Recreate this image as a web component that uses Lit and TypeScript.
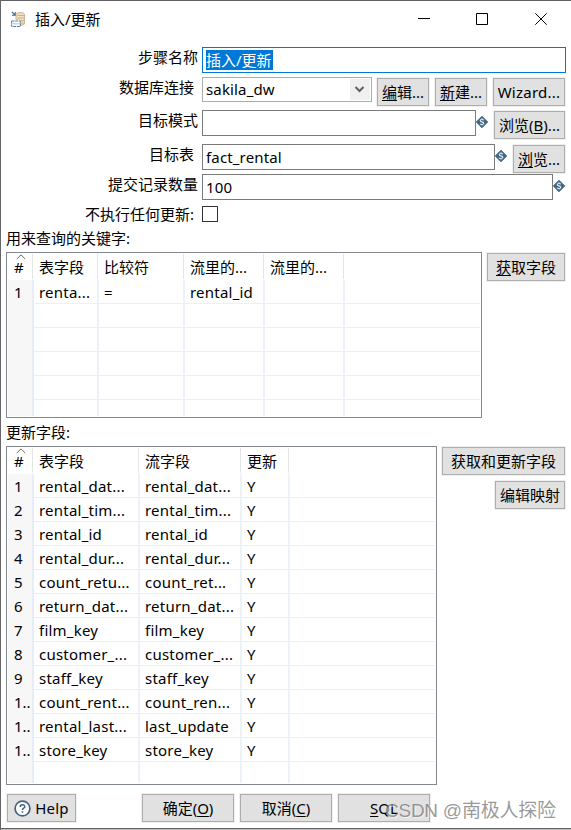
import { LitElement, html, css, nothing } from "lit";
import { customElement, property } from "lit/decorators.js";

const fontStack = css`"Noto Sans", "Noto Sans CJK SC", sans-serif`;

@customElement("push-button")
class PushButton extends LitElement {
  static styles = css`
    :host { display: block; flex: none; height: 28px; }
    .face {
      box-sizing: border-box; width: 100%; height: 28px; padding: 0; margin: 0;
      display: flex; align-items: center; justify-content: center; gap: 4px;
      border: 1px solid #adadad; border-radius: 0; background: #e1e1e1;
      box-shadow: 0 0 0 1px #f0f0f0; color: #000;
      font: 15px/26px ${fontStack}; white-space: nowrap; letter-spacing: var(--tracking, 0);
    }
  `;
  render() {
    return html`<button class="face"><slot></slot></button>`;
  }
}

@customElement("variable-mark")
class VariableMark extends LitElement {
  static styles = css`
    :host { display: block; flex: none; width: 12px; height: 12px; margin-top: 6px; }
    .mark { display: block; }
  `;
  render() {
    return html`<svg class="mark" width="12" height="12" viewBox="0 0 12 12">
      <path d="M6 .3 11.7 6 6 11.7 .3 6Z" fill="#3f6583" stroke="#3f6583" stroke-width="1" stroke-linejoin="round" />
      <path d="M7.9 4.2C7.5 3.4 4.2 3 4.2 4.7 4.2 6.2 7.8 5.6 7.8 7.3 7.8 9 4.5 8.7 4 7.7M6 2.3V3.3M6 8.6V9.6" fill="none" stroke="#e3ebf0" stroke-width="1.15" />
    </svg>`;
  }
}

interface Column { title: string; width: number; }

@customElement("field-table")
class FieldTable extends LitElement {
  @property({ attribute: false }) columns: Column[] = [];
  @property({ attribute: false }) rows: string[][] = [];
  @property({ type: Number }) blanks = 0;

  static styles = css`
    :host {
      display: block; box-sizing: border-box; flex: none; border: 1px solid #828790;
      background: #fff; overflow: hidden; padding: 0 1px 1px; font: 15px/24px ${fontStack};
      letter-spacing: 0.22px;
    }
    .grid { display: flex; flex-direction: column; height: 100%; overflow: hidden; }
    .line { display: grid; height: 24px; flex: none; box-sizing: border-box; border-bottom: 1px solid #efeff0; }
    .head { height: 27px; border-bottom: 0; letter-spacing: 0; }
    .cell { padding-left: 5px; white-space: nowrap; overflow: hidden; border-right: 2px solid #edf1fa; height: 24px; }
    .cell.index { padding-left: 6px; background: #f7f7f7; border-right-color: #e6edf9; letter-spacing: 0; }
    .cell.rest { border-right: 0; }
    .head .cell {
      position: relative; height: 25px; margin-top: 1px; line-height: 27px;
      border-right: 1px solid #e5e5e5; margin-right: 1px;
    }
    .head .index { background: #fff; }
    .head .rest { border-right: 0; }
    .sort { position: absolute; left: 8px; top: 0; }
  `;

  private line(cells: string[], tracks: string, head = false) {
    return html`<div class="line ${head ? "head" : ""}" style="grid-template-columns:${tracks}">
      ${this.columns.map((_, i) => html`<div class="cell ${i ? "" : "index"}">${head && !i
        ? html`<svg class="sort" width="10" height="6" viewBox="0 0 10 6"><path d="M.8 5 5 .9 9.2 5" fill="none" stroke="#666" /></svg>`
        : nothing}${cells[i] ?? ""}</div>`)}
      <div class="cell rest"></div>
    </div>`;
  }

  render() {
    const tracks = this.columns.map((c) => `${c.width}px`).join(" ") + " 1fr";
    return html`<div class="grid">
      ${this.line(this.columns.map((c) => c.title), tracks, true)}
      ${this.rows.map((r) => this.line(r, tracks))}
      ${Array.from({ length: this.blanks }, () => this.line([], tracks))}
    </div>`;
  }
}

const keyColumns: Column[] = [
  { title: "#", width: 26 }, { title: "表字段", width: 65 }, { title: "比较符", width: 86 },
  { title: "流里的...", width: 80 }, { title: "流里的...", width: 80 },
];
const keyRows = [["1", "renta...", "=", "rental_id", ""]];

const updateColumns: Column[] = [
  { title: "#", width: 26 }, { title: "表字段", width: 106 },
  { title: "流字段", width: 102 }, { title: "更新", width: 48 },
];
const updateRows = [
  ["1", "rental_dat...", "rental_dat...", "Y"],
  ["2", "rental_tim...", "rental_tim...", "Y"],
  ["3", "rental_id", "rental_id", "Y"],
  ["4", "rental_dur...", "rental_dur...", "Y"],
  ["5", "count_retu...", "count_ret...", "Y"],
  ["6", "return_dat...", "return_dat...", "Y"],
  ["7", "film_key", "film_key", "Y"],
  ["8", "customer_...", "customer_...", "Y"],
  ["9", "staff_key", "staff_key", "Y"],
  ["1..", "count_rent...", "count_ren...", "Y"],
  ["1..", "rental_last...", "last_update", "Y"],
  ["1..", "store_key", "store_key", "Y"],
];

@customElement("app-root")
class AppRoot extends LitElement {
  static styles = css`
    :host {
      display: block; position: relative; box-sizing: border-box; width: 571px; height: 830px;
      overflow: hidden; background: #fff; color: #000; font: 15px/22px ${fontStack};
      border-top: 1px solid #626065; border-left: 1px solid #66666a;
    }
    .window { box-sizing: border-box; display: flex; flex-direction: column; height: 828px; border-bottom: 1px solid #626262; box-shadow: 0 1px #c0c0c0; }
    .title { display: flex; height: 46px; flex: none; align-items: flex-start; }
    .logo { margin: 10px 8px 0 10px; }
    .name { flex: 1; line-height: 36px; }
    .controls { margin-right: 23px; }
    .row { display: flex; align-items: flex-start; flex: none; }
    .r30 { height: 30px; }
    .r33 { height: 33px; }
    .r34 { height: 34px; }
    .r29 { height: 29px; }
    .r25 { height: 25px; }
    .label { box-sizing: border-box; width: 201px; padding-right: 4px; text-align: right; flex: none; white-space: nowrap; line-height: 20px; }
    .label.inset { padding-right: 8px; }
    .label.option { line-height: 22px; }
    .field {
      box-sizing: border-box; flex: none; height: 26px; border: 1px solid #7a7a7a; padding: 0 3px;
      line-height: 25px; white-space: nowrap; letter-spacing: 0.15px;
    }
    .focused { border-color: #0078d7; width: 364px; padding-top: 2px; }
    .selection { display: block; width: 67px; height: 20px; line-height: 20px; background: #0078d7; color: #fff; letter-spacing: 0; }
    .combo { display: flex; justify-content: space-between; width: 170px; height: 25px; border-color: #acacac; padding-right: 1px; line-height: 23px; }
    .arrow { display: block; margin-top: 1px; background: #f0f0f0; }
    .schema { width: 274px; }
    .target { width: 293px; }
    .commit { width: 351px; }
    .check { box-sizing: border-box; width: 16px; height: 16px; margin-top: 3px; border: 1px solid #333; }
    .w52 { width: 52px; }
    .w71 { width: 71px; }
    .w72 { width: 72px; }
    .w78 { width: 78px; }
    .w123 { width: 123px; }
    .w70 { width: 70px; }
    .w69 { width: 69px; }
    .w92 { width: 92px; }
    .latin { --tracking: 0.25px; }
    .drop { margin-top: 1px; }
    .ml5 { margin-left: 5px; }
    .ml6 { margin-left: 6px; }
    .caption { padding-left: 5px; height: 24px; line-height: 20px; flex: none; }
    .block { display: flex; gap: 5px; padding: 0 5px; flex: none; align-items: flex-start; }
    .keys { width: 476px; height: 166px; }
    .updates { width: 431px; height: 339px; }
    .side { display: flex; flex-direction: column; align-items: flex-end; gap: 6px; padding-top: 1px; }
    .second { margin-top: 4px; }
    .actions { display: flex; gap: 6px; padding: 9px 6px 0; }
    .help { margin-right: 60px; }
    .watermark {
      position: absolute; left: 384px; top: 797px; font-size: 19px; line-height: 26px; white-space: nowrap;
      letter-spacing: -0.25px; color: rgba(120, 120, 120, 0.75); text-shadow: 1px 1px 0 rgba(255, 255, 255, 0.6);
      font-family: "Liberation Sans", "Noto Sans CJK SC", sans-serif;
    }
    u { text-underline-offset: 2px; text-decoration-thickness: 1px; text-decoration-skip-ink: none; }
  `;

  render() {
    return html`<div class="window">
        <div class="title">
          <svg class="logo" width="16" height="17" viewBox="0 0 16 17">
            <path d="M5 3.5Q5 1.5 9 1.5T13.5 3V13Q12 14.5 9 14.5V9H5Z" fill="#f3dfbf" stroke="#baa88c" stroke-width=".8" />
            <path d="M6.5 4.5H13M6.5 7H13M10 9.5H13M10 12H13" stroke="#c5a67a" stroke-width=".8" />
            <path d="M.8 .8 4 4M4.2 1V4.2H1" fill="none" stroke="#3c6785" stroke-width="1.1" />
            <path d="M.6 9H9.4V15.5H.6Z" fill="#fff" />
            <path d="M.6 10H9.4V15.5H.6Z" fill="none" stroke="#56809b" stroke-width="1" stroke-dasharray="3 .7" />
            <path d="M1 12.8H9" stroke="#9bb4c3" stroke-width=".8" />
          </svg>
          <span class="name">插入/更新</span>
          <svg class="controls" width="130" height="36" viewBox="0 0 130 36" fill="none" stroke="#000">
            <path d="M0 17.5H12M58.5 12.5H69.5V23.5H58.5Z" />
            <path d="M117.3 12.3 128.7 23.7M128.7 12.3 117.3 23.7" />
          </svg>
        </div>

        <div class="row r30">
          <span class="label">步骤名称</span>
          <div class="field focused"><span class="selection">插入/更新</span></div>
        </div>
        <div class="row r33">
          <span class="label inset">数据库连接</span>
          <div class="field combo">sakila_dw
            <svg class="arrow" width="20" height="21" viewBox="0 0 20 21"><path d="M5.5 8 9.5 12 13.5 8" fill="none" stroke="#606060" stroke-width="2" /></svg>
          </div>
          <push-button class="w52 drop ml5"><span><u>编</u>辑...</span></push-button>
          <push-button class="w52 drop ml6"><span><u>新</u>建...</span></push-button>
          <push-button class="w72 drop ml6 latin">Wizard...</push-button>
        </div>
        <div class="row r34">
          <span class="label">目标模式</span>
          <div class="field schema"></div>
          <variable-mark></variable-mark>
          <push-button class="w71 drop ml6"><span>浏览(<u>B</u>)...</span></push-button>
        </div>
        <div class="row r30">
          <span class="label inset">目标表</span>
          <div class="field target">fact_rental</div>
          <variable-mark></variable-mark>
          <push-button class="w52 drop ml6"><span><u>浏</u>览...</span></push-button>
        </div>
        <div class="row r29">
          <span class="label">提交记录数量</span>
          <div class="field commit">100</div>
          <variable-mark></variable-mark>
        </div>
        <div class="row r25">
          <span class="label inset option">不执行任何更新:</span>
          <div class="check"></div>
        </div>

        <div class="caption">用来查询的关键字:</div>
        <div class="block">
          <field-table class="keys" .columns=${keyColumns} .rows=${keyRows} .blanks=${5}></field-table>
          <div class="side"><push-button class="w78"><span><u>获</u>取字段</span></push-button></div>
        </div>

        <div class="caption second">更新字段:</div>
        <div class="block">
          <field-table class="updates" .columns=${updateColumns} .rows=${updateRows} .blanks=${1}></field-table>
          <div class="side">
            <push-button class="w123">获取和更新字段</push-button>
            <push-button class="w70">编辑映射</push-button>
          </div>
        </div>

        <div class="actions">
          <push-button class="w69 help latin">
            <svg width="17" height="17" viewBox="0 0 17 17">
              <circle cx="8.5" cy="8.5" r="7.4" fill="#fff" stroke="#3f6583" stroke-width="1.7" />
              <path d="M6.2 7C6.2 4 10.8 4.1 10.8 6.7 10.8 8.3 8.5 8.2 8.5 10M8.5 11.2V12.8" fill="none" stroke="#3f6583" stroke-width="1.5" />
            </svg>
            Help
          </push-button>
          <push-button class="w92"><span>确定(<u>O</u>)</span></push-button>
          <push-button class="w92"><span>取消(<u>C</u>)</span></push-button>
          <push-button class="w92"><span><u>S</u>QL</span></push-button>
        </div>
      </div>
      <div class="watermark">CSDN @南极人探险</div>`;
  }
}
